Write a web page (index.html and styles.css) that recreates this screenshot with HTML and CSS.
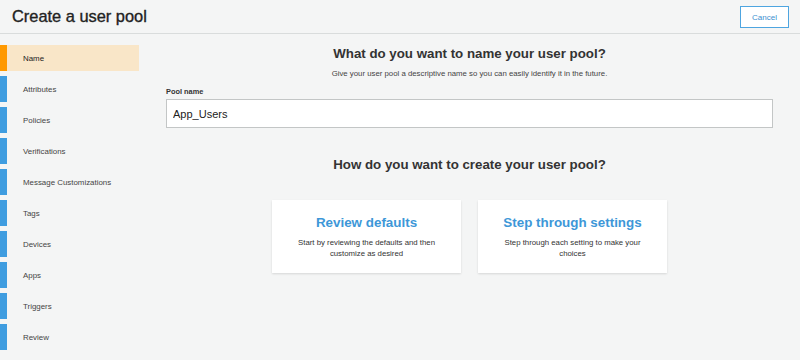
FILE: index.html
```html
<!DOCTYPE html>
<html lang="en">
<head>
    <meta charset="UTF-8">
    <meta name="viewport" content="width=device-width, initial-scale=1.0">
    <title>Create a user pool</title>
    <link rel="stylesheet" href="styles.css">
</head>
<body>

<!-- Page header -->
<div class="page-header">
    <h1>Create a user pool</h1>
    <button class="cancel-btn">Cancel</button>
</div>

<div class="layout">
    <!-- Wizard steps -->
    <ul class="steps">
        <li class="step active">Name</li>
        <li class="step">Attributes</li>
        <li class="step">Policies</li>
        <li class="step">Verifications</li>
        <li class="step">Message Customizations</li>
        <li class="step">Tags</li>
        <li class="step">Devices</li>
        <li class="step">Apps</li>
        <li class="step">Triggers</li>
        <li class="step">Review</li>
    </ul>

    <div class="main">
        <h2>What do you want to name your user pool?</h2>
        <p class="hint">Give your user pool a descriptive name so you can easily identify it in the future.</p>

        <label class="field-label" for="pool-name">Pool name</label>
        <input type="text" id="pool-name" class="pool-input" value="App_Users">

        <h2 class="second">How do you want to create your user pool?</h2>

        <div class="choices">
            <div class="choice">
                <h3>Review defaults</h3>
                <p>Start by reviewing the defaults and then customize as desired</p>
            </div>
            <div class="choice">
                <h3>Step through settings</h3>
                <p>Step through each setting to make your choices</p>
            </div>
        </div>
    </div>
</div>

</body>
</html>
```

FILE: styles.css
```css
body {
    margin: 0;
    font-family: "Liberation Sans", Arial, sans-serif;
    background-color: #f4f5f5;
    color: #333;
}

/* Header */
.page-header {
    height: 33px;
    display: flex;
    align-items: center;
    justify-content: space-between;
    padding: 0 11px 0 12px;
    border-bottom: 1px solid #d9dcdc;
}

.page-header h1 {
    margin: 0;
    font-size: 16.4px;
    font-weight: normal;
    color: #222;
    -webkit-text-stroke: 0.35px #222;
    padding-bottom: 1px;
}

.cancel-btn {
    width: 49px;
    height: 22px;
    background-color: #fff;
    border: 1px solid #4ea5e0;
    color: #3c8fd0;
    font-family: inherit;
    font-size: 8px;
    padding: 0;
    margin-top: 1px;
    cursor: pointer;
}

.layout {
    display: flex;
}

/* Steps sidebar */
.steps {
    list-style: none;
    margin: 0;
    padding: 11px 0 0 0;
    width: 139px;
    flex-shrink: 0;
}

.step {
    height: 26px;
    margin-bottom: 5px;
    display: flex;
    align-items: center;
    padding-left: 16px;
    border-left: 7px solid #3f9de0;
    font-size: 7.9px;
    color: #444;
}

.step.active {
    border-left-color: #ff9900;
    background-color: #f9e6c8;
    color: #222;
}

/* Main area */
.main {
    flex: 1;
    padding: 0 27px;
    display: flex;
    flex-direction: column;
    align-items: center;
}

.main h2 {
    margin: 12px 0 0 0;
    font-size: 13.3px;
    line-height: 16px;
    color: #333;
}

.main h2.second {
    margin-top: 29px;
}

.hint {
    margin: 7px 0 0 0;
    font-size: 7.8px;
    color: #444;
}

.field-label {
    align-self: flex-start;
    margin-top: 9px;
    font-size: 7.4px;
    font-weight: bold;
    color: #333;
}

.pool-input {
    align-self: stretch;
    height: 29px;
    margin-top: 3px;
    box-sizing: border-box;
    border: 1px solid #c3c6c6;
    background-color: #fff;
    padding: 0 6px;
    font-family: inherit;
    font-size: 11px;
    color: #222;
    outline: none;
}

.choices {
    display: flex;
    gap: 17px;
    margin-top: 27px;
}

.choice {
    width: 189px;
    height: 73px;
    box-sizing: border-box;
    background-color: #fff;
    box-shadow: 0 1px 2px rgba(0, 0, 0, 0.12);
    text-align: center;
    padding: 15px 14px 0;
}

.choice h3 {
    margin: 0;
    font-size: 13.4px;
    line-height: 15px;
    color: #3d97d8;
}

.choice p {
    margin: 8px 0 0 0;
    font-size: 7.8px;
    line-height: 10.5px;
    color: #333;
}
```
